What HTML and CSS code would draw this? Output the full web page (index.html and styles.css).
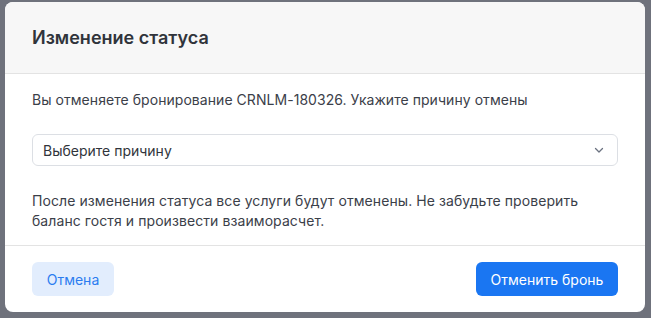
FILE: index.html
```html
<!DOCTYPE html>
<html lang="ru">
<head>
  <meta charset="UTF-8" />
  <meta name="viewport" content="width=device-width, initial-scale=1.0">
  <title>Изменение статуса</title>
  <link rel="stylesheet" href="styles.css">
</head>
<body>

  <div class="modal">
    <div class="modal-header">
      <h2>Изменение статуса</h2>
    </div>

    <div class="modal-body">
      <p class="lead">Вы отменяете бронирование CRNLM-180326. Укажите причину отмены</p>

      <div class="select">
        <span>Выберите причину</span>
        <svg width="12" height="12" viewBox="0 0 12 12">
          <path d="M2.5 4.5 L6 8 L9.5 4.5" fill="none" stroke="#6b7280" stroke-width="1.3" stroke-linecap="round" stroke-linejoin="round"/>
        </svg>
      </div>

      <p class="note">После изменения статуса все услуги будут отменены. Не забудьте проверить баланс гостя и произвести взаиморасчет.</p>
    </div>

    <div class="modal-footer">
      <button class="btn btn-light">Отмена</button>
      <button class="btn btn-primary">Отменить бронь</button>
    </div>
  </div>

</body>
</html>
```

FILE: styles.css
```css
body {
  margin: 0;
  padding: 2px 6px 6px 5px;
  background-color: #6f727c;
  font-family: 'Inter', 'Noto Sans', sans-serif;
  color: #3b4049;
}

.modal {
  width: 640px;
  background-color: white;
  border-radius: 8px;
  overflow: hidden;
}

.modal-header {
  background-color: #f7f7f7;
  border-bottom: 1px solid #e3e3e3;
  height: 71px;
  display: flex;
  align-items: center;
  padding: 0 27px;
}

h2 {
  margin: 0;
  font-size: 18px;
  font-weight: 600;
  color: #30343b;
}

.modal-body {
  padding: 16px 27px 14px;
  border-bottom: 1px solid #e3e3e3;
}

.lead {
  margin: 0;
  font-size: 14px;
  line-height: 20px;
  letter-spacing: 0.05px;
}

.select {
  margin-top: 24px;
  height: 32px;
  box-sizing: border-box;
  border: 1px solid #dcdfe4;
  border-radius: 6px;
  display: flex;
  align-items: center;
  justify-content: space-between;
  padding: 0 12px 0 10px;
  font-size: 14px;
  color: #30343b;
}

.note {
  margin: 25px 0 0;
  font-size: 14px;
  line-height: 20px;
  letter-spacing: 0.08px;
}

.modal-footer {
  display: flex;
  justify-content: space-between;
  padding: 16px 27px;
}

.btn {
  height: 34px;
  border: none;
  border-radius: 6px;
  font-family: inherit;
  font-size: 14px;
  padding: 0;
  white-space: nowrap;
}

.btn-light {
  background-color: #e2edfd;
  color: #2b7cf0;
  width: 82px;
}

.btn-primary {
  background-color: #1a76f2;
  color: white;
  width: 142px;
}
```
